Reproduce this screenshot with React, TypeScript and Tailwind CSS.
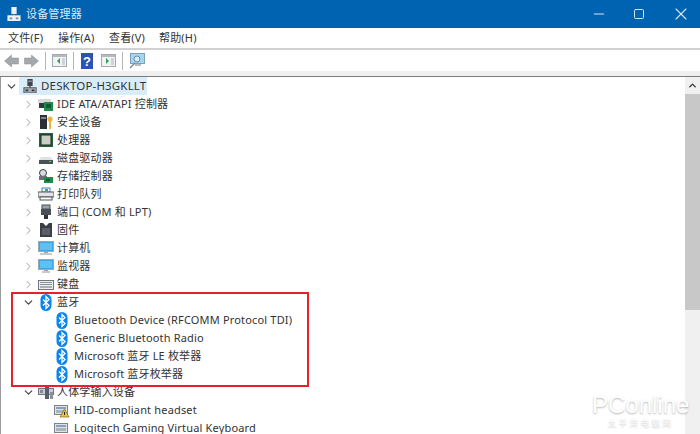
import React from 'react';
import { ChevronDown, ChevronRight, ChevronUp, Minus, Square, X } from 'lucide-react';

const Computer = ({ light = false }: { light?: boolean }) => (
    <svg width="14" height="14" viewBox="0 0 16 16">
        <rect x="5" y="0" width="6" height="8" fill={light ? '#e8eef5' : '#3f444b'} />
        <rect x="6" y="2" width="4" height="1" fill={light ? '#fff' : '#c8ccd2'} />
        <rect x="7" y="8" width="2" height="3" fill="#6b7280" />
        <rect x="1" y="10" width="14" height="6" fill={light ? '#f2f5f8' : '#a6abb2'} stroke={light ? '#dfe6ee' : '#4a4f57'} />
        <rect x="3" y="12" width="3" height="2" fill={light ? '#6f8aa6' : '#30343a'} />
        <rect x="10" y="12" width="3" height="2" fill={light ? '#6f8aa6' : '#30343a'} />
    </svg>
);

const Ide = () => (
    <svg width="16" height="16" viewBox="0 0 16 16">
        <rect x="0" y="3" width="13" height="4" fill="#d5d7da" />
        <rect x="1" y="7" width="6" height="5" fill="#33373c" />
        <rect x="6" y="6" width="9" height="9" fill="#1f8a4c" />
        <rect x="8" y="8" width="5" height="4" fill="#0d5c30" />
    </svg>
);

const Security = () => (
    <svg width="16" height="16" viewBox="0 0 16 16">
        <rect x="2" y="1" width="7" height="14" fill="#2c3036" />
        <rect x="3" y="3" width="5" height="2" fill="#7e858e" />
        <circle cx="12" cy="5" r="2.6" fill="#e8b53a" />
        <rect x="11" y="7" width="2" height="8" fill="#e8b53a" />
    </svg>
);

const Cpu = () => (
    <svg width="16" height="16" viewBox="0 0 16 16">
        <rect x="1" y="1" width="14" height="14" fill="#27613f" />
        <rect x="3" y="3" width="10" height="10" fill="#c9cdc4" stroke="#1c2b22" />
    </svg>
);

const Disk = () => (
    <svg width="16" height="16" viewBox="0 0 16 16">
        <path d="M3 7h10l2 3v3H1v-3z" fill="#dfe1e3" />
        <rect x="1" y="10" width="14" height="4" fill="#4b5058" />
        <rect x="11" y="11" width="2" height="1" fill="#46d36a" />
    </svg>
);

const Storage = () => (
    <svg width="16" height="16" viewBox="0 0 16 16">
        <circle cx="5" cy="5" r="3.5" fill="#d9dcdf" stroke="#3a3f45" />
        <rect x="1" y="8" width="8" height="4" fill="#6c7178" />
        <rect x="6" y="9" width="9" height="6" fill="#1f8a4c" />
        <rect x="8" y="11" width="4" height="2" fill="#0d5c30" />
    </svg>
);

const Printer = () => (
    <svg width="16" height="16" viewBox="0 0 16 16">
        <rect x="4" y="2" width="8" height="4" fill="#fff" stroke="#3f7fbf" />
        <rect x="0" y="6" width="16" height="5" fill="#e2e4e6" stroke="#50555c" />
        <rect x="2" y="11" width="12" height="3" fill="#fff" stroke="#50555c" />
        <rect x="7" y="3" width="3" height="2" fill="#2fae5a" />
    </svg>
);

const Port = () => (
    <svg width="16" height="16" viewBox="0 0 16 16">
        <rect x="4" y="1" width="8" height="4" fill="#9fa4aa" stroke="#4a4f57" />
        <rect x="3" y="5" width="10" height="6" fill="#4a4f57" />
        <rect x="6" y="11" width="4" height="4" fill="#2f3338" />
    </svg>
);

const Firmware = () => (
    <svg width="16" height="16" viewBox="0 0 16 16">
        <path d="M2 1h3l3 3 3-3h3v14H2z" fill="#3b3f45" />
        <rect x="4" y="6" width="8" height="7" fill="#5b6068" />
    </svg>
);

const Monitor = ({ stand = false }: { stand?: boolean }) => (
    <svg width="16" height="16" viewBox="0 0 16 16">
        <rect x="0.5" y="1.5" width="15" height="10" fill="#35a7ee" stroke="#9aa9b8" />
        <rect x="2" y="3" width="12" height="7" fill="#5cc1f5" />
        <rect x="6" y="12" width="4" height="1" fill="#9aa3ad" />
        <rect x={stand ? 2 : 4} y="13" width={stand ? 12 : 8} height="2" fill="#c5cad0" />
    </svg>
);

const Keyboard = () => (
    <svg width="16" height="16" viewBox="0 0 16 16">
        <rect x="0.5" y="4.5" width="15" height="9" fill="#eceef0" stroke="#70767d" />
        <rect x="2" y="6" width="12" height="1" fill="#8a9097" />
        <rect x="2" y="8" width="12" height="1" fill="#8a9097" />
        <rect x="2" y="10" width="12" height="2" fill="#aab0b6" />
    </svg>
);

const Bluetooth = () => (
    <svg width="12" height="17" viewBox="0 0 12 17">
        <rect x="0.5" y="0" width="11" height="17" rx="5.5" fill="#0a84ee" />
        <path d="M3 5.5l6 6-3 3V2.5l3 3-6 6" fill="none" stroke="#fff" strokeWidth="1.3" />
    </svg>
);

const Hid = ({ warn = false }: { warn?: boolean }) => (
    <svg width="16" height="16" viewBox="0 0 16 16">
        <rect x="0.5" y="3.5" width="13" height="9" fill="#dfe3e7" stroke="#7c838b" />
        <rect x="2" y="5" width="10" height="2" fill="#8da0b3" />
        <rect x="2" y="8" width="10" height="3" fill="#a9b3bd" />
        {warn && <path d="M10.5 7l4.5 8H6z" fill="#f2c230" stroke="#6b5510" strokeWidth="0.6" />}
        {warn && <rect x="10" y="10" width="1" height="3" fill="#222" />}
    </svg>
);

const HidGroup = () => (
    <svg width="16" height="16" viewBox="0 0 16 16">
        <rect x="0.5" y="4.5" width="15" height="6" fill="#c8ced5" stroke="#70767d" />
        <rect x="2" y="6" width="3" height="3" fill="#7e8a96" />
        <rect x="7" y="2" width="4" height="13" fill="#596068" />
        <rect x="12" y="8" width="3" height="7" fill="#8a929a" />
    </svg>
);

type Row = { label: string; icon: React.ReactNode; depth: number; open?: boolean };

const rows: Row[] = [
    { label: 'IDE ATA/ATAPI 控制器', icon: <Ide />, depth: 1 },
    { label: '安全设备', icon: <Security />, depth: 1 },
    { label: '处理器', icon: <Cpu />, depth: 1 },
    { label: '磁盘驱动器', icon: <Disk />, depth: 1 },
    { label: '存储控制器', icon: <Storage />, depth: 1 },
    { label: '打印队列', icon: <Printer />, depth: 1 },
    { label: '端口 (COM 和 LPT)', icon: <Port />, depth: 1 },
    { label: '固件', icon: <Firmware />, depth: 1 },
    { label: '计算机', icon: <Monitor stand />, depth: 1 },
    { label: '监视器', icon: <Monitor />, depth: 1 },
    { label: '键盘', icon: <Keyboard />, depth: 1 },
    { label: '蓝牙', icon: <Bluetooth />, depth: 1, open: true },
    { label: 'Bluetooth Device (RFCOMM Protocol TDI)', icon: <Bluetooth />, depth: 2 },
    { label: 'Generic Bluetooth Radio', icon: <Bluetooth />, depth: 2 },
    { label: 'Microsoft 蓝牙 LE 枚举器', icon: <Bluetooth />, depth: 2 },
    { label: 'Microsoft 蓝牙枚举器', icon: <Bluetooth />, depth: 2 },
    { label: '人体学输入设备', icon: <HidGroup />, depth: 1, open: true },
    { label: 'HID-compliant headset', icon: <Hid warn />, depth: 2 },
    { label: 'Logitech Gaming Virtual Keyboard', icon: <Hid />, depth: 2 },
];

const ToolPanel = ({ arrow }: { arrow: string }) => (
    <svg width="15" height="15" viewBox="0 0 15 15">
        <rect x="0.5" y="1.5" width="14" height="12" fill="#f2f3f4" stroke="#a3a9af" />
        <rect x="1" y="2" width="13" height="2" fill="#b4bac0" />
        <rect x="10" y="5" width="3" height="7" fill="#cfd3d7" />
        <path d={arrow} fill="#2fa356" />
    </svg>
);

const Sep = () => <div className="h-[18px] w-px shrink-0 bg-[#b5b5b5]" />;

export default function App() {
    return (
        <div className="relative flex h-[434px] w-[700px] flex-col overflow-hidden bg-white font-['Noto_Sans','Noto_Sans_CJK_SC',sans-serif] text-[11px] tracking-[0.17px] text-[#333]">
            <div className="flex h-[28px] shrink-0 items-center bg-[#0063b1] pl-[7px] text-white">
                <Computer light />
                <span className="ml-[5px] text-[#d9e8f5]">设备管理器</span>
                <div className="ml-auto flex items-center text-[#d5e6f5]">
                    <Minus size={16} strokeWidth={1.6} className="mr-[26px]" />
                    <Square size={12} strokeWidth={2} className="mr-[26px]" />
                    <X size={20} strokeWidth={1.3} className="mr-[9px]" />
                </div>
            </div>
            <div className="flex h-[20px] shrink-0 items-center gap-[15px] whitespace-nowrap pl-[8px]">
                <span className="w-[35px]">文件(F)</span>
                <span className="w-[36px]">操作(A)</span>
                <span className="w-[35px]">查看(V)</span>
                <span className="w-[36px]">帮助(H)</span>
            </div>
            <div className="h-[2px] shrink-0 bg-[#d2d2d2]" />
            <div className="flex h-[21px] shrink-0 items-center pl-[4px]">
                <svg width="35" height="14" viewBox="0 0 35 14">
                    <path d="M0.5 7l7-6v3h7v6h-7v3z" fill="#a6a9ac" stroke="#8a8d90" strokeWidth="0.5" />
                    <path d="M34.5 7l-7-6v3h-7v6h7v3z" fill="#a6a9ac" stroke="#8a8d90" strokeWidth="0.5" />
                </svg>
                <div className="ml-[6px]"><Sep /></div>
                <div className="ml-[6px]"><ToolPanel arrow="M5 8l3-3v6z" /></div>
                <div className="ml-[6px]"><Sep /></div>
                <svg className="ml-[7px]" width="12" height="16" viewBox="0 0 12 16">
                    <rect x="0" y="0" width="12" height="16" fill="#2a53b5" />
                    <text x="6" y="13" fontSize="13" fontWeight="700" textAnchor="middle" fill="#fff" fontFamily="Liberation Sans, sans-serif">?</text>
                </svg>
                <div className="ml-[8px]"><ToolPanel arrow="M5 5l3 3-3 3z" /></div>
                <div className="ml-[6px]"><Sep /></div>
                <svg className="ml-[6px]" width="16" height="16" viewBox="0 0 16 16">
                    <rect x="1.5" y="0.5" width="14" height="10" fill="#a9d4ee" stroke="#7aa2bd" />
                    <rect x="6" y="11" width="6" height="2" fill="#b4bcc4" />
                    <path d="M1 15l5-5" stroke="#7f8b96" strokeWidth="1.5" />
                    <circle cx="8" cy="6" r="3" fill="#d9eefb" stroke="#5f8fae" />
                </svg>
            </div>
            <div className="h-[5px] shrink-0 bg-[#f0f0f0]" />
            <div className="h-px shrink-0 bg-[#7c7c7c]" />
            <div className="flex min-h-0 flex-1">
                <div className="w-px shrink-0 bg-[#9a9a9a]" />
                <div className="min-w-0 flex-1 overflow-hidden">
                    <div className="flex h-[18px] items-center">
                        <ChevronDown size={13} strokeWidth={2.2} className="ml-[4px] text-[#444]" />
                        <div className="ml-[1px] flex h-[18px] items-center bg-[#d9ecf9] pl-[4px] pr-[1px]">
                            <Computer />
                            <span className="ml-[4px] text-[11.5px]">DESKTOP-H3GKLLT</span>
                        </div>
                    </div>
                    {rows.map((row) => (
                        <div key={row.label} className="flex h-[18px] items-center whitespace-nowrap">
                            {row.depth === 1 ? (
                                <>
                                    {row.open ? (
                                        <ChevronDown size={13} strokeWidth={2.2} className="ml-[21px] shrink-0 text-[#444]" />
                                    ) : (
                                        <ChevronRight size={13} strokeWidth={1.8} className="ml-[21px] shrink-0 text-[#a0a0a0]" />
                                    )}
                                    <div className="ml-[2px] flex w-[18px] shrink-0 justify-center">{row.icon}</div>
                                </>
                            ) : (
                                <div className="ml-[53px] flex w-[16px] shrink-0 justify-center">{row.icon}</div>
                            )}
                            <span className={row.depth === 1 ? 'ml-[2px]' : 'ml-[4px]'}>{row.label}</span>
                        </div>
                    ))}
                </div>
                <div className="flex w-[15px] shrink-0 flex-col bg-[#f0f0f0]">
                    <div className="flex h-[17px] items-center justify-center text-[#333]">
                        <ChevronUp size={11} strokeWidth={3} />
                    </div>
                    <div className="h-[216px] bg-[#c8c8c8]" />
                </div>
            </div>
            {/* red annotation from the article */}
            <div className="absolute left-[11px] top-[292px] h-[95px] w-[298px] border-2 border-[#e8202c]" />
            {/* watermark */}
            <div className="absolute left-[592px] top-[391px] flex flex-col items-center text-white [text-shadow:0_1px_2px_rgba(0,0,0,0.3)]">
                <span className="font-['Liberation_Sans',sans-serif] text-[24px] leading-[27px] tracking-normal">PConline</span>
                <span className="text-[8px] leading-[10px] tracking-[3px]">太平洋电脑网</span>
            </div>
        </div>
    );
}
